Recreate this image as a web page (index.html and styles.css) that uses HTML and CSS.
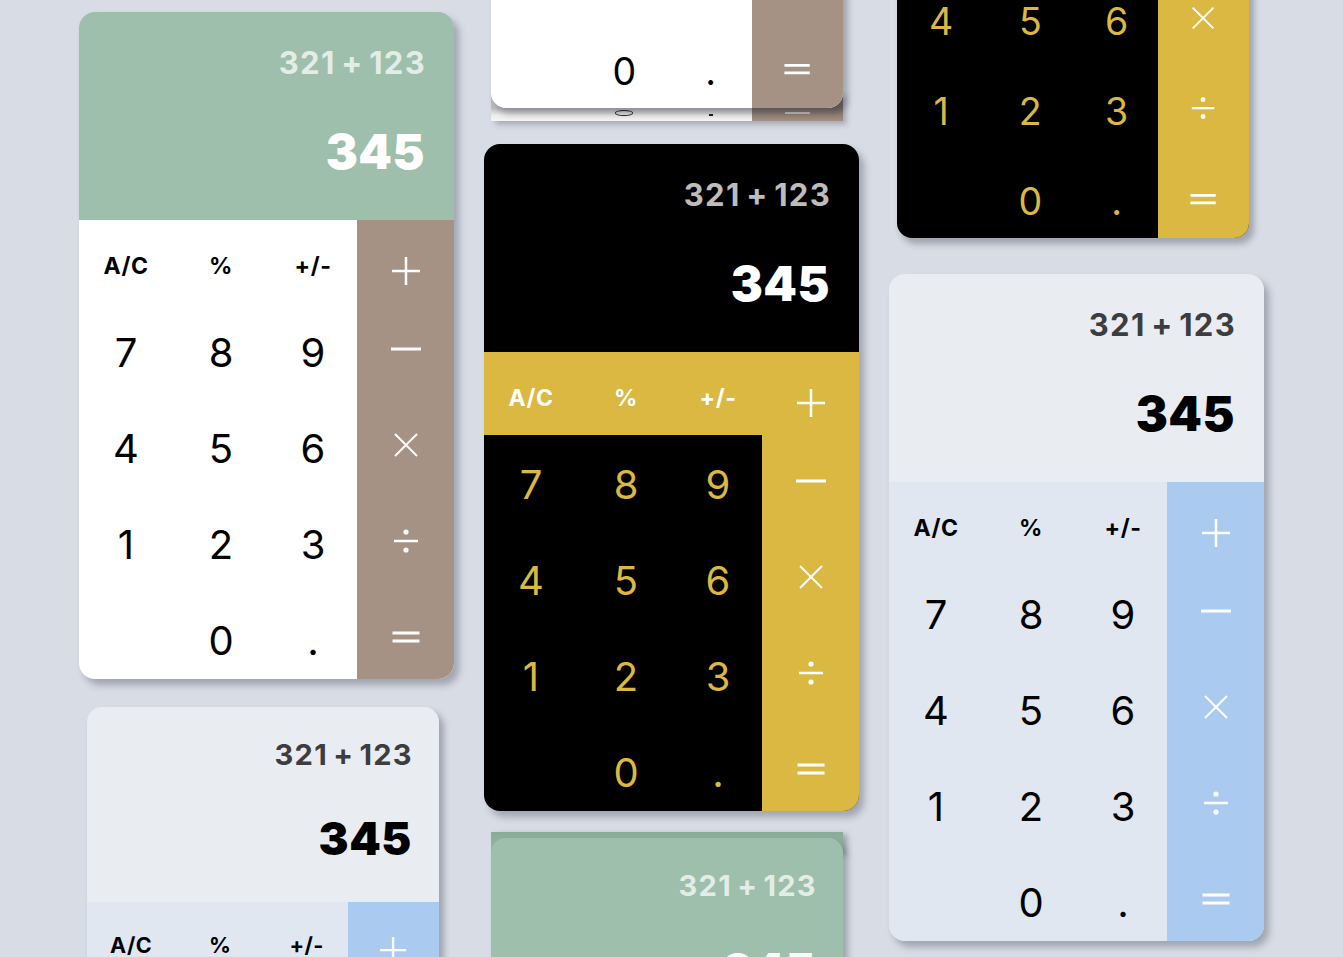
FILE: index.html
```html
<!DOCTYPE html>
<html lang="en">

<head>
    <meta charset="UTF-8">
    <meta name="viewport" content="width=device-width, initial-scale=1.0">
    <title>Calculadoras</title>
    <link rel="stylesheet" href="styles.css">
</head>

<body>
    <div class="board">
        <div class="column">
            <div class="slot slot-card1">
                <div class="calc green"></div>
            </div>
            <div class="slot slot-card6">
                <div class="mock small">
                    <div class="calc light"></div>
                </div>
            </div>
        </div>

        <div class="column">
            <div class="slot slot-card2">
                <div class="mock small">
                    <div class="calc green"></div>
                    <div class="strip strip-bottom">
                        <div class="s"></div>
                        <div class="s"><span class="ghost-zero"></span></div>
                        <div class="s"><span class="ghost-dot"></span></div>
                        <div class="s s-op"><span class="ghost-line"></span></div>
                    </div>
                </div>
            </div>
            <div class="slot slot-card3">
                <div class="calc dark"></div>
            </div>
            <div class="slot slot-card7">
                <div class="mock small">
                    <div class="strip strip-top"></div>
                    <div class="calc green"></div>
                </div>
            </div>
        </div>

        <div class="column">
            <div class="slot slot-card4">
                <div class="mock small">
                    <div class="calc dark"></div>
                </div>
            </div>
            <div class="slot slot-card5">
                <div class="calc light"></div>
            </div>
        </div>
    </div>

    <script>
        document.addEventListener("DOMContentLoaded", function () {
            const iconos = {
                plus: '<path d="M15 1V29M1 15H29" stroke-width="2.5"/>',
                minus: '<path d="M0 15H30" stroke-width="3"/>',
                times: '<path d="M4 4L26 26M26 4L4 26" stroke-width="2"/>',
                divide: '<path d="M3 15H27" stroke-width="2.5"/><circle cx="15" cy="6" r="2.6"/><circle cx="15" cy="24" r="2.6"/>',
                equals: '<path d="M1.5 11H28.5M1.5 19H28.5" stroke-width="3"/>'
            };

            const teclas = [
                ["A/C", "fn"], ["%", "fn"], ["+/-", "fn"], ["plus", "op plus"],
                ["7"], ["8"], ["9"], ["minus", "op"],
                ["4"], ["5"], ["6"], ["times", "op"],
                ["1"], ["2"], ["3"], ["divide", "op"],
                [""], ["0"], ["."], ["equals", "op"]
            ];

            document.querySelectorAll(".calc").forEach(function (calc) {
                const pantalla = document.createElement("div");
                pantalla.className = "display";
                pantalla.innerHTML = '<div class="expr">321 + 123</div><div class="result">345</div>';
                calc.appendChild(pantalla);

                const teclado = document.createElement("div");
                teclado.className = "keypad";
                teclas.forEach(function (t) {
                    const tecla = document.createElement("div");
                    tecla.className = "key " + (t[1] || "num");
                    if (t[1] && t[1].startsWith("op")) {
                        tecla.innerHTML = '<svg viewBox="0 0 30 30" width="30" height="30">' + iconos[t[0]] + '</svg>';
                    } else {
                        tecla.textContent = t[0];
                    }
                    teclado.appendChild(tecla);
                });
                calc.appendChild(teclado);
            });
        });
    </script>
</body>

</html>
```

FILE: styles.css
```css
* {
    box-sizing: border-box;
}

body {
    margin: 0;
    height: 957px;
    overflow: hidden;
    background-color: #d8dce5;
    font-family: Inter, "Liberation Sans", sans-serif;
}

.board {
    display: flex;
    gap: 30px;
    padding-left: 79px;
    align-items: flex-start;
}

.column {
    display: flex;
    flex-direction: column;
    width: 375px;
    flex-shrink: 0;
}

.slot-card1 {
    margin-top: 12px;
}

.slot-card6 {
    margin-top: 28px;
    margin-left: 8px;
}

.slot-card2 {
    margin-top: -518px;
    margin-left: 7px;
}

.slot-card3 {
    margin-top: 23px;
}

.slot-card7 {
    margin-top: 21px;
    margin-left: 7px;
}

.slot-card4 {
    margin-top: -388px;
    margin-left: 8px;
}

.slot-card5 {
    margin-top: 36px;
}

.mock.small {
    zoom: 0.9387;
    width: 375px;
}

/* tarjeta */
.calc {
    width: 375px;
    height: 667px;
    border-radius: 16px;
    overflow: hidden;
    display: flex;
    flex-direction: column;
    position: relative;
    z-index: 1;
    box-shadow: 5px 6px 7px rgba(45, 50, 65, 0.32);
}

.display {
    height: 208px;
    flex-shrink: 0;
    display: flex;
    flex-direction: column;
    align-items: flex-end;
    padding-right: 29px;
}

.expr {
    font-size: 31px;
    font-weight: 700;
    line-height: 30px;
    margin-top: 36px;
    letter-spacing: 1.3px;
    word-spacing: -3px;
    margin-right: -1px;
}

.result {
    font-size: 48px;
    font-weight: 900;
    line-height: 48px;
    margin-top: 50px;
    letter-spacing: 0.5px;
}

.keypad {
    display: grid;
    grid-template-columns: 94px 96px 88px 97px;
    grid-template-rows: 83px repeat(4, 96px);
    flex-shrink: 0;
}

.key {
    display: flex;
    align-items: center;
    justify-content: center;
    font-size: 40px;
    font-weight: 400;
    line-height: 1;
}

.key.num {
    padding-top: 3px;
}

.key.fn {
    font-size: 23px;
    font-weight: 700;
    padding-top: 9px;
    letter-spacing: 0.5px;
}

.key.op {
    padding-bottom: 4px;
}

.key.plus {
    padding-top: 19px;
    padding-bottom: 0;
}

.key svg {
    stroke: #fff;
    fill: none;
}

.key svg circle {
    fill: #fff;
    stroke: none;
}

/* temas */
.green .display {
    background-color: #9ebfac;
    color: #fff;
}

.green .expr {
    color: rgba(255, 255, 255, 0.72);
}

.green .keypad {
    background-color: #fff;
    color: #000;
}

.green .op {
    background-color: #a59284;
}

.dark .display {
    background-color: #000;
    color: #fff;
}

.dark .expr {
    color: #bdbdbd;
}

.dark .keypad {
    background-color: #000;
    color: #dbb842;
}

.dark .fn {
    background-color: #dbb842;
    color: #fff;
}

.dark .op {
    background-color: #dbb842;
}

.light .display {
    background-color: #e9edf2;
    color: #000;
}

.light .expr {
    color: #3c3d40;
}

.light .keypad {
    background-color: #e0e7f0;
    color: #000;
}

.light .op {
    background-color: #aacbef;
}

/* reflejos */
.strip-bottom {
    margin-top: -17px;
    height: 31px;
    display: grid;
    grid-template-columns: 94px 96px 88px 97px;
    box-shadow: 4px 4px 6px rgba(45, 50, 65, 0.3);
}

.strip-bottom .s {
    display: flex;
    justify-content: center;
    align-items: flex-start;
    padding-top: 19px;
    background: linear-gradient(#bdbdbd 55%, #ececec 80%, #f5f5f5);
}

.strip-bottom .s-op {
    padding-top: 21px;
    background: linear-gradient(#74675e 55%, #948377 80%, #a39082);
}

.ghost-zero {
    width: 19px;
    height: 6px;
    border: 2px solid #1a1a1a;
    border-radius: 50%;
}

.ghost-dot {
    width: 4px;
    height: 2px;
    margin-top: 4px;
    background-color: #1a1a1a;
}

.ghost-line {
    width: 26px;
    height: 2px;
    background-color: #c9c0b8;
}

.strip-top {
    height: 23px;
    margin-bottom: -17px;
    background: linear-gradient(#8aab97, #9ab9a6);
    box-shadow: 5px 2px 6px rgba(45, 50, 65, 0.35);
}
```
